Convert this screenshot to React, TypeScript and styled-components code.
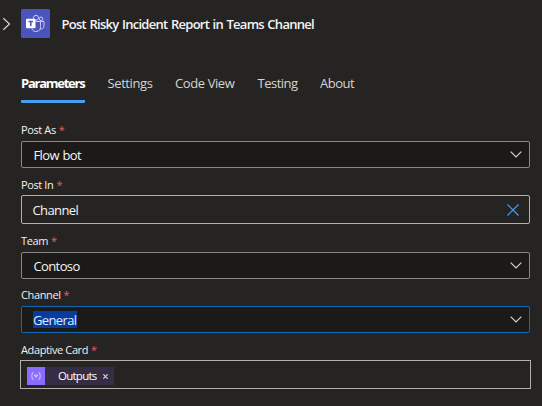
import React from "react";
import styled, { createGlobalStyle } from "styled-components";

const Global = createGlobalStyle`
  * { box-sizing: border-box; }
  body { margin: 0; background: #252423; color: #fff; font-family: "Open Sans", "Noto Sans", sans-serif; }
`;

const Panel = styled.main`
  width: 542px;
  height: 406px;
  overflow: hidden;
  background: #252423;
`;

const Header = styled.header`
  display: flex;
  align-items: center;
  height: 48px;
  padding-left: 2px;
`;

const Collapse = styled.svg`
  width: 9px;
  height: 14px;
  flex: none;
  fill: none;
  stroke: #d6d4d2;
  stroke-width: 1.2;
`;

const Logo = styled.svg`
  width: 29px;
  height: 29px;
  margin: -1px 11.5px 0 10px;
  flex: none;
`;

const Title = styled.h1`
  margin: 0;
  font-size: 13px;
  line-height: 18px;
  font-weight: 600;
  letter-spacing: -0.71px;
  word-spacing: 0.7px;
  white-space: nowrap;
  color: #f5f4f3;
`;

const Tabs = styled.nav`
  display: flex;
  gap: 22.5px;
  height: 37px;
  margin: 18px 0 0 21px;
`;

const Tab = styled.a<{ $active?: boolean; $width: number; $spacing: number }>`
  width: ${(p) => p.$width}px;
  height: 37px;
  padding-top: 8px;
  font-size: 13px;
  line-height: 18px;
  white-space: nowrap;
  font-weight: ${(p) => (p.$active ? 700 : 400)};
  letter-spacing: ${(p) => p.$spacing}px;
  color: ${(p) => (p.$active ? "#fff" : "#d6d4d2")};
  border-bottom: 3px solid ${(p) => (p.$active ? "#479ef5" : "transparent")};
  border-radius: 1px;
`;

const Form = styled.form`
  display: flex;
  flex-direction: column;
  padding: 18px 12px 0 21px;
`;

const Field = styled.div<{ $height: number }>`
  display: flex;
  flex-direction: column;
  height: ${(p) => p.$height}px;
`;

const Label = styled.label<{ $low?: boolean }>`
  height: 20px;
  flex: none;
  font-size: 11px;
  line-height: ${(p) => (p.$low ? 20 : 18)}px;
  letter-spacing: -0.38px;
  white-space: nowrap;
  color: #f3f2f1;
`;

const Required = styled.span`
  color: #e0605e;
  margin-left: 0.5px;
`;

const Select = styled.div<{ $focused?: boolean }>`
  display: flex;
  align-items: center;
  justify-content: space-between;
  height: 27px;
  padding: 0 7px 0 11.5px;
  background: #1b1a19;
  border: 1px solid ${(p) => (p.$focused ? "#1267b4" : "#8a8886")};
  border-radius: 2px;
`;

const ComboInput = styled(Select)`
  height: 29px;
  padding: 0 10px 0 10.5px;
  background: #252423;
  border-color: #b3b0ad;
`;

const Value = styled.span<{ $selected?: boolean }>`
  height: 17px;
  font-size: 13px;
  line-height: 19px;
  letter-spacing: -0.62px;
  word-spacing: 0.8px;
  margin-left: ${(p) => (p.$selected ? -0.5 : 0)}px;
  color: ${(p) => (p.$selected ? "#e4e9f5" : "#f5f4f3")};
  background: ${(p) => (p.$selected ? "#063b9f" : "transparent")};
`;

const Glyph = styled.svg`
  width: 12px;
  height: 12px;
  fill: none;
  stroke: #d6d4d2;
  stroke-width: 1.2;
`;

const ClearGlyph = styled(Glyph)`
  stroke: #479ef5;
`;

const TokenInput = styled.div`
  display: flex;
  align-items: center;
  height: 29px;
  margin: 0 -1px;
  padding-left: 6px;
  border: 1px solid #b3b0ad;
`;

const Token = styled.span`
  display: flex;
  align-items: center;
  width: 87px;
  height: 18px;
  margin-top: 3px;
  background: #342d44;
`;

const TokenIcon = styled.svg`
  width: 18px;
  height: 18px;
  flex: none;
  background: #8c6cff;
`;

const TokenLabel = styled.span`
  width: 45px;
  margin-left: 13px;
  font-size: 11.5px;
  line-height: 16px;
  letter-spacing: -0.75px;
  white-space: nowrap;
`;

const RemoveGlyph = styled(Glyph)`
  width: 5px;
  height: 5px;
  margin-top: 1px;
`;

const Chevron = () => (
  <Glyph viewBox="0 0 12 12"><path d="M.7 2.7 6 8l5.3-5.3" /></Glyph>
);

const FieldLabel = ({ children, low }: { children: string; low?: boolean }) => (
  <Label $low={low}>{children} <Required>*</Required></Label>
);

const tabs = [
  { name: "Parameters", width: 64, spacing: -1.25 },
  { name: "Settings", width: 45, spacing: -0.4 },
  { name: "Code View", width: 60, spacing: -0.4 },
  { name: "Testing", width: 40, spacing: -0.5 },
  { name: "About", width: 35, spacing: -0.5 },
];

export default function App() {
  return (
    <Panel>
      <Global />
      <Header>
        <Collapse viewBox="0 0 9 14"><path d="m1.3 1.2 6.2 5.8-6.2 5.8" /></Collapse>
        <Logo viewBox="0 0 29 29">
          <rect width="29" height="29" rx="1.5" fill="#4b53bc" />
          <g fill="none" stroke="#c9ccfb" strokeWidth="1">
            <circle cx="15" cy="8.8" r="2.5" />
            <circle cx="20" cy="9.8" r="1.8" />
            <path d="M15 12.5h4.500v5a4.500 4.500 0 0 1-8.700 2M19.500 12.500h3.500v4.300c0 2.200-1.600 3.500-4 3.200" />
          </g>
          <rect x="5" y="9.8" width="9.500" height="9.500" rx="1" fill="#fff" />
          <path d="M7.500 12.500h4.600M9.800 12.500v4.500" stroke="#4b53bc" strokeWidth="1.500" />
        </Logo>
        <Title>Post Risky Incident Report in Teams Channel</Title>
      </Header>
      <Tabs>
        {tabs.map((t, i) => (
          <Tab key={t.name} $active={i === 0} $width={t.width} $spacing={t.spacing}>{t.name}</Tab>
        ))}
      </Tabs>
      <Form>
        <Field $height={54}>
          <FieldLabel>Post As</FieldLabel>
          <Select><Value>Flow bot</Value><Chevron /></Select>
        </Field>
        <Field $height={57}>
          <FieldLabel low>Post In</FieldLabel>
          <ComboInput>
            <Value>Channel</Value>
            <ClearGlyph viewBox="0 0 12 12"><path d="m.5.5 11 11m0-11-11 11" /></ClearGlyph>
          </ComboInput>
        </Field>
        <Field $height={54}>
          <FieldLabel>Team</FieldLabel>
          <Select><Value>Contoso</Value><Chevron /></Select>
        </Field>
        <Field $height={54}>
          <FieldLabel>Channel</FieldLabel>
          <Select $focused><Value $selected>General</Value><Chevron /></Select>
        </Field>
        <Field $height={54}>
          <FieldLabel low>Adaptive Card</FieldLabel>
          <TokenInput>
            <Token>
              <TokenIcon viewBox="0 0 18 18" fill="none" stroke="#d9ceff" strokeWidth="1">
                <path d="M6.500 5.500c-1.300 0-1.300.500-1.300 1.500S5 8.700 4.400 9c.6.3.8 1 .8 2s0 1.500 1.300 1.500M11.500 5.500c1.300 0 1.300.500 1.300 1.500s.2 1.700.8 2c-.6.3-.8 1-.8 2s0 1.500-1.300 1.500M7.300 8h3.400L9 10.500z" />
              </TokenIcon>
              <TokenLabel>Outputs</TokenLabel>
              <RemoveGlyph viewBox="0 0 5 5"><path d="m.3.3 4.400 4.400m0-4.400L.3 4.700" /></RemoveGlyph>
            </Token>
          </TokenInput>
        </Field>
      </Form>
    </Panel>
  );
}
